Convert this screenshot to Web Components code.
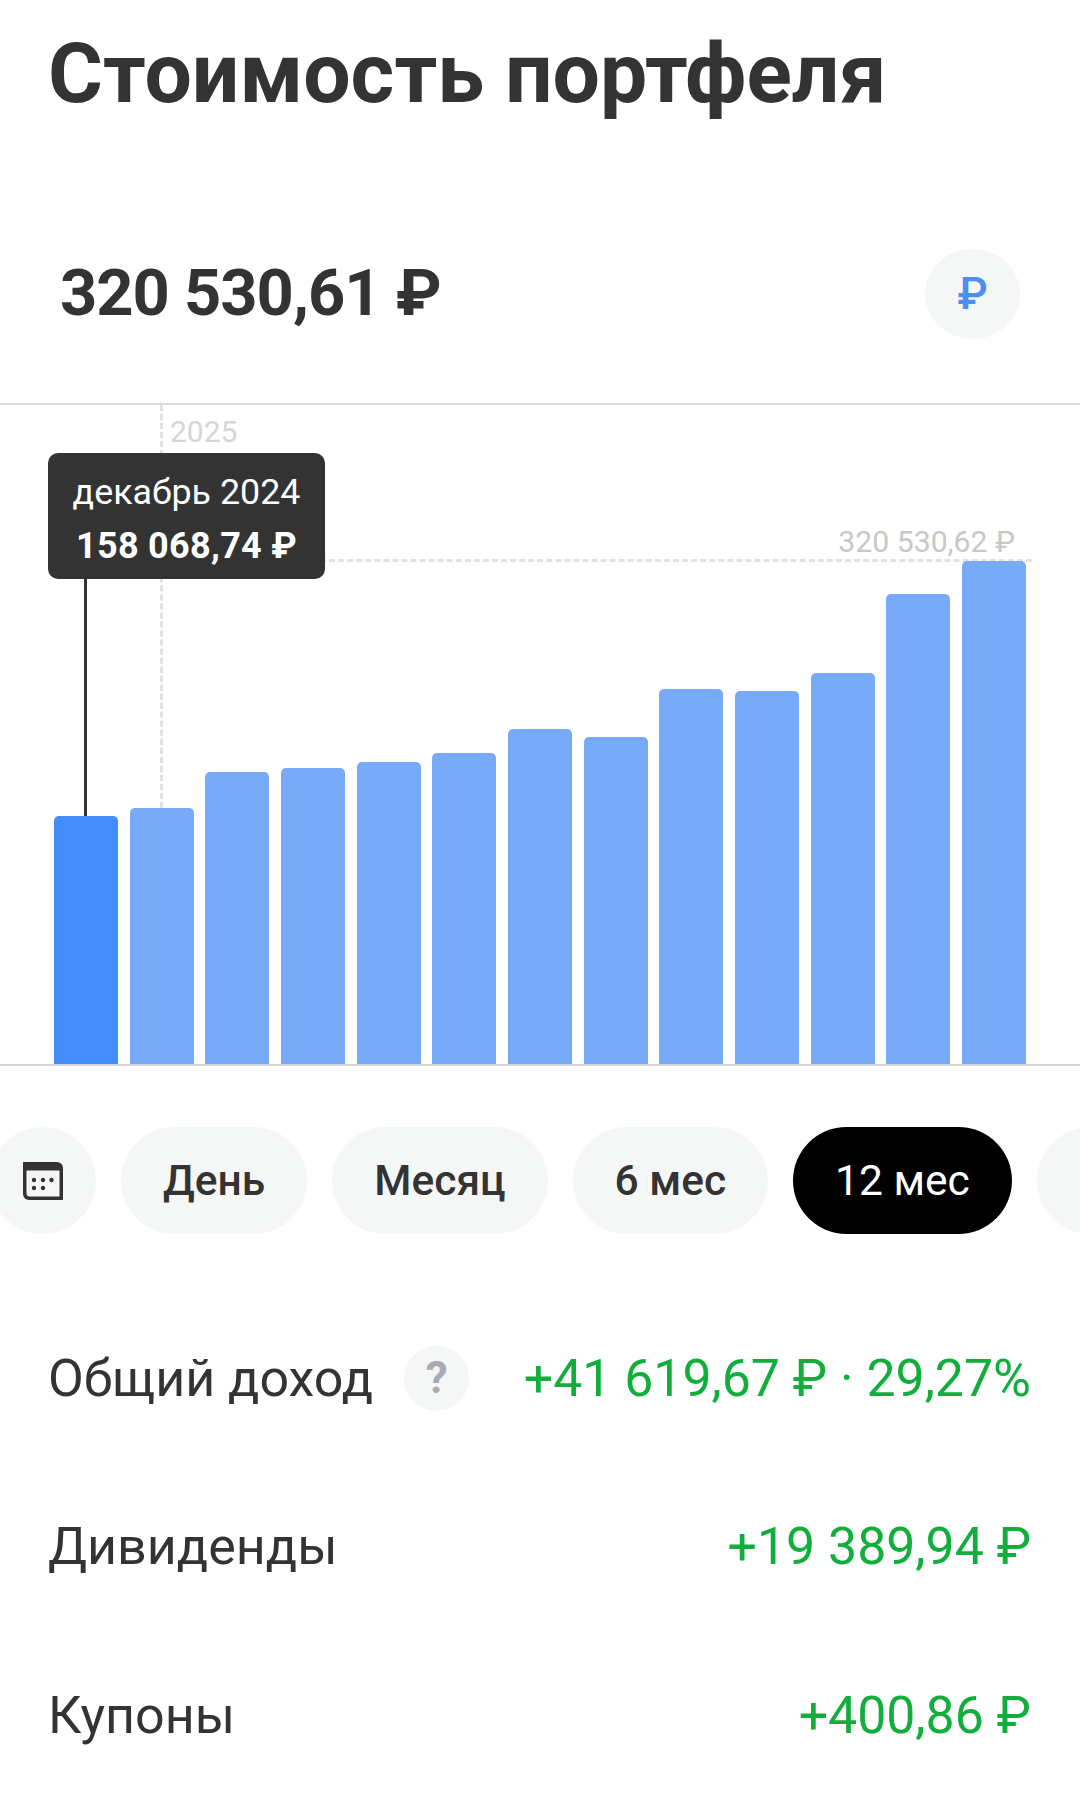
<!DOCTYPE html>
<html lang="ru">
<head>
<meta charset="utf-8">
<title>Стоимость портфеля</title>
<style>
  html, body { margin: 0; background: #fff; }
  body { font-family: Roboto, "Noto Sans", sans-serif; color: #333; height: 1797px; overflow: hidden; }
</style>
</head>
<body>
<pf-title>Стоимость портфеля</pf-title>
<pf-summary>320 530,61 ₽</pf-summary>
<pf-chart tops="816 808 772 768 762 753 729 737 689 691 673 594 561"></pf-chart>
<pf-pills>
  <pf-pill icon="calendar"></pf-pill>
  <pf-pill>День</pf-pill>
  <pf-pill>Месяц</pf-pill>
  <pf-pill>6 мес</pf-pill>
  <pf-pill active>12 мес</pf-pill>
  <pf-pill icon="empty"></pf-pill>
</pf-pills>
<pf-rows>
  <pf-row help><span slot="label">Общий доход</span><span slot="value">+41 619,67 ₽ · 29,27%</span></pf-row>
  <pf-row><span slot="label">Дивиденды</span><span slot="value">+19 389,94 ₽</span></pf-row>
  <pf-row><span slot="label">Купоны</span><span slot="value">+400,86 ₽</span></pf-row>
</pf-rows>

<script>
function shadow(el, html) {
  const root = el.attachShadow({ mode: 'open' });
  root.innerHTML = html;
  return root;
}

class PfTitle extends HTMLElement {
  constructor() {
    super();
    shadow(this, `<style>
      :host { display: flex; align-items: center; height: 146px; padding-left: 48px;
        font-size: 84px; font-weight: 700; color: #333; white-space: nowrap; }
    </style><slot></slot>`);
  }
}
customElements.define('pf-title', PfTitle);

class PfSummary extends HTMLElement {
  constructor() {
    super();
    shadow(this, `<style>
      :host { display: flex; align-items: center; justify-content: space-between;
        padding: 103px 60px 64px 60px; font-size: 65px; font-weight: 700; color: #333; letter-spacing: -1px; }
      .txt { padding-bottom: 3px; }
      .cur { width: 95px; height: 90px; border-radius: 50%; background: #f5f7f7; letter-spacing: 0;
        display: flex; align-items: center; justify-content: center;
        font-size: 44px; font-weight: 500; color: #4b8ff0; }
    </style><span class="txt"><slot></slot></span><span class="cur">₽</span>`);
  }
}
customElements.define('pf-summary', PfSummary);

class PfChart extends HTMLElement {
  constructor() {
    super();
    const tops = this.getAttribute('tops').split(' ').map(Number);
    const base = 1064;
    const chartTop = 405;
    const bars = tops.map((t, i) =>
      `<div class="bar${i === 0 ? ' on' : ''}" style="height:${base - t}px"></div>`).join('');
    shadow(this, `<style>
      :host { display: block; position: relative; height: 659px;
        border-top: 2px solid #dcdcdc; border-bottom: 2px solid #cfd3d8; }
      .bars { display: flex; align-items: flex-end; gap: 11.67px; height: 100%; padding-left: 54px; box-sizing: border-box; }
      .bar { width: 64px; background: #79aaf8; border-radius: 5px 5px 0 0; position: relative; z-index: 1; }
      .bar.on { background: #438cfb; }
      .v { position: absolute; left: 160px; top: 0; height: ${808 - chartTop}px; border-left: 3px dashed #e2e2e2; }
      .h { position: absolute; left: 320px; top: ${559 - chartTop}px; width: 712px; border-top: 3px dashed #e2e2e2; }
      .year { position: absolute; left: 170px; top: 9px; font-size: 30px; line-height: 36px; color: #d6d6d6; }
      .max { position: absolute; right: 65px; top: ${525 - chartTop}px; font-size: 30.2px; line-height: 34px; color: #c8c8c8; white-space: nowrap; }
      .tip { position: absolute; left: 48px; top: ${453 - chartTop}px; width: 277px; height: 126px; box-sizing: border-box;
        background: #333; color: #fff; border-radius: 10px; z-index: 2; padding-top: 5px;
        display: flex; flex-direction: column; align-items: center; justify-content: center; gap: 12px; }
      .tip .m { font-size: 35.8px; line-height: 42px; }
      .tip .s { font-size: 36px; line-height: 42px; font-weight: 700; letter-spacing: .3px; }
      .stem { position: absolute; left: 84px; top: ${579 - chartTop}px; height: ${816 - 579}px; width: 3px; background: #333; }
    </style>
    <div class="v"></div><div class="h"></div>
    <div class="year">2025</div>
    <div class="max">320 530,62 ₽</div>
    <div class="bars">${bars}</div>
    <div class="stem"></div>
    <div class="tip"><span class="m">декабрь 2024</span><span class="s">158 068,74 ₽</span></div>`);
  }
}
customElements.define('pf-chart', PfChart);

class PfPills extends HTMLElement {
  constructor() {
    super();
    shadow(this, `<style>
      :host { display: block; overflow: hidden; margin-top: 61px; }
      .strip { display: flex; gap: 25px; margin-left: -11px; width: max-content; }
    </style><div class="strip"><slot></slot></div>`);
  }
}
customElements.define('pf-pills', PfPills);

class PfPill extends HTMLElement {
  constructor() {
    super();
    const cal = `<svg width="42" height="40" viewBox="0 0 42 40"><path fill="#333" d="M1 1h34a6 6 0 0 1 6 6v32H7a6 6 0 0 1-6-6z"/><path fill="#f5f7f7" d="M4.500 9.500h33v26h-30a3 3 0 0 1-3-3z"/><g fill="#333"><circle cx="12" cy="19" r="2.200"/><circle cx="21" cy="19" r="2.200"/><circle cx="29.500" cy="19" r="2.200"/><circle cx="12" cy="27" r="2.200"/><circle cx="21" cy="27" r="2.200"/></g></svg>`;
    const icon = this.getAttribute('icon');
    shadow(this, `<style>
      :host { display: flex; flex: none; align-items: center; justify-content: center; height: 107px; box-sizing: border-box;
        border-radius: 54px; background: #f5f7f7; color: #333; font-size: 42.5px; font-weight: 500; padding: 0 42px; }
      :host([icon]) { width: 107px; padding: 0; }
      :host([active]) { background: #000; color: #fff; font-weight: 400; }
    </style>${icon === 'calendar' ? cal : icon ? '' : '<slot></slot>'}`);
  }
}
customElements.define('pf-pill', PfPill);

class PfRows extends HTMLElement {
  constructor() {
    super();
    shadow(this, `<style>
      :host { display: block; margin-top: 60px; padding: 0 49px 0 48px; }
    </style><slot></slot>`);
  }
}
customElements.define('pf-rows', PfRows);

class PfRow extends HTMLElement {
  constructor() {
    super();
    const help = this.hasAttribute('help') ? '<span class="q">?</span>' : '';
    shadow(this, `<style>
      :host { display: flex; align-items: center; height: 168.5px; font-size: 52px; color: #333; white-space: nowrap; }
      .q { width: 65px; height: 65px; border-radius: 50%; background: #f5f7f7; margin-left: 31px;
        display: flex; align-items: center; justify-content: center; font-size: 44px; font-weight: 700; color: #a9abb5; }
      .val { margin-left: auto; color: #12ae3c; font-size: 51.8px; }
    </style><slot name="label"></slot>${help}<span class="val"><slot name="value"></slot></span>`);
  }
}
customElements.define('pf-row', PfRow);
</script>
</body>
</html>
